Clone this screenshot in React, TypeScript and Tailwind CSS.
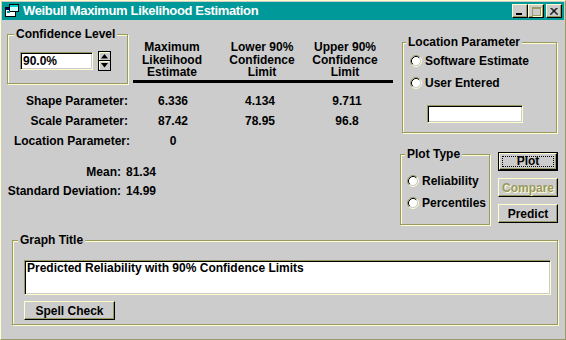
import React from "react";

const GroupBox = ({ label, className, labelClass, children }: { label: string; className: string; labelClass: string; children?: React.ReactNode }) => (
  <div className={`relative border border-[#999966] shadow-[inset_1px_1px_0_#ffffcc,1px_1px_0_#ffffcc] ${className}`}>
    <span className={`absolute -top-[8px] bg-[#cccccc] px-[2px] leading-[14px] ${labelClass}`}>{label}</span>
    {children}
  </div>
);

const RadioIcon = () => (
  <svg width="12" height="12" viewBox="0 0 12 12" className="shrink-0">
    <circle cx="6" cy="6" r="4.5" fill="#ffffff" />
    <path d="M2.11 9.89 A5.5 5.5 0 0 1 9.89 2.11" fill="none" stroke="#999966" />
    <path d="M9.89 2.11 A5.5 5.5 0 0 1 2.11 9.89" fill="none" stroke="#ffffcc" />
    <path d="M2.82 9.18 A4.5 4.5 0 0 1 9.18 2.82" fill="none" stroke="#000000" />
    <path d="M9.18 2.82 A4.5 4.5 0 0 1 2.82 9.18" fill="none" stroke="#cccccc" />
  </svg>
);

const Radio = ({ label, className = "" }: { label: string; className?: string }) => (
  <div className={`flex h-[14px] items-center gap-[3px] leading-[14px] ${className}`}>
    <RadioIcon />
    <span>{label}</span>
  </div>
);

const Field = ({ className, children }: { className: string; children?: React.ReactNode }) => (
  <div className={`border border-t-[#999966] border-l-[#999966] border-b-[#ffffcc] border-r-[#ffffcc] bg-white shadow-[inset_1px_1px_0_#000,inset_-1px_-1px_0_#cccccc] ${className}`}>
    {children}
  </div>
);

const Btn = ({ children, className = "", disabled = false }: { children: React.ReactNode; className?: string; disabled?: boolean }) => (
  <div
    className={`flex items-center justify-center border border-t-[#ffffcc] border-l-[#ffffcc] border-b-black border-r-black shadow-[inset_-1px_-1px_0_#999966] ${
      disabled ? "text-[#999966] [text-shadow:1px_1px_0_#ffffcc]" : ""
    } ${className}`}
  >
    {children}
  </div>
);

const Spin = () => (
  <svg width="13" height="20" viewBox="0 0 13 20" className="ml-[5px] -mt-[1px]">
    <rect x="0.5" y="0.5" width="12" height="19" fill="#cccccc" stroke="#000" />
    <path d="M1.5 9V1.5H11" fill="none" stroke="#ffffcc" />
    <path d="M1.5 18.5V10.5H11" fill="none" stroke="#ffffcc" />
    <line x1="1" y1="9.5" x2="12" y2="9.5" stroke="#000" />
    <path d="M6.5 3 L10 7.5 H3 Z" fill="#000" />
    <path d="M3 12 H10 L6.5 16.5 Z" fill="#000" />
  </svg>
);

const TitleBtn = ({ children, className = "" }: { children: React.ReactNode; className?: string }) => (
  <div className={`flex h-[14px] w-[16px] items-center justify-center border border-t-[#ffffcc] border-l-[#ffffcc] border-b-black border-r-black bg-[#cccccc] shadow-[inset_-1px_-1px_0_#999966] ${className}`}>
    {children}
  </div>
);

const TitleBar = () => (
  <div className="flex h-[18px] items-center bg-[#009999] text-white">
    <svg width="16" height="16" viewBox="0 0 16 16" className="ml-[2px]">
      <rect x="1.5" y="4.5" width="10" height="9" fill="#fff" stroke="#000" />
      <rect x="2" y="5" width="9" height="2" fill="#000080" />
      <rect x="5.5" y="1.5" width="9" height="7" fill="#ccffff" stroke="#000" />
      <rect x="6" y="2" width="8" height="2" fill="#00cccc" />
      <rect x="3" y="8" width="3" height="2" fill="#009999" />
    </svg>
    <span className="ml-[3px] text-[13px] tracking-[-0.35px]">Weibull Maximum Likelihood Estimation</span>
    <div className="ml-auto mr-[2px] flex items-center">
      <TitleBtn>
        <div className="mt-[6px] -ml-[2px] h-[2px] w-[6px] bg-black" />
      </TitleBtn>
      <TitleBtn>
        <div className="h-[9px] w-[9px] border border-[#999966] border-t-2 shadow-[1px_1px_0_#ffffcc]" />
      </TitleBtn>
      <TitleBtn className="ml-[2px]">
        <svg width="8" height="7" viewBox="0 0 8 7">
          <path d="M0.5 0 L7.5 7 M7.5 0 L0.5 7 M1.5 0 L8 6.5 M6.5 0 L0 6.5" stroke="#000" strokeWidth="1" />
        </svg>
      </TitleBtn>
    </div>
  </div>
);

const heads = [
  ["Maximum", "Likelihood", "Estimate"],
  ["Lower 90%", "Confidence", "Limit"],
  ["Upper 90%", "Confidence", "Limit"],
];

const rows = [
  ["Shape Parameter:", "6.336", "4.134", "9.711"],
  ["Scale Parameter:", "87.42", "78.95", "96.8"],
  ["Location Parameter:", "0", "", ""],
];

const App = () => {
  return (
    <div className="h-[340px] w-[566px] overflow-hidden bg-[#cccccc] font-['Liberation_Sans',Arial,sans-serif] text-[12px] font-bold text-black">
      <div className="flex h-[340px] w-[566px] flex-col border border-t-[#ffffcc] border-l-[#ffffcc] border-b-[#999966] border-r-[#999966] p-[1px]">
        <TitleBar />
        <div className="flex h-[220px]">
          <div className="w-[394px]">
            <div className="flex items-start">
              <GroupBox label="Confidence Level" className="ml-[5px] mt-[14px] h-[50px] w-[121px]" labelClass="left-[6px]">
                <div className="flex items-start pl-[12px] pt-[17px]">
                  <Field className="h-[18px] w-[73px] pl-[2px] leading-[16px]">90.0%</Field>
                  <Spin />
                </div>
              </GroupBox>
              <div className="ml-[5px] mt-[21px] w-[260px]">
                <div className="grid grid-cols-[78px_102px_64px] leading-[12.5px]">
                  {heads.map((h) => (
                    <div key={h[0]} className="flex flex-col items-center whitespace-nowrap">
                      {h.map((t) => (
                        <div key={t}>{t}</div>
                      ))}
                    </div>
                  ))}
                </div>
                <div className="mt-[1.5px] h-[3px] bg-black" />
              </div>
            </div>
            <div className="mt-[7px] grid grid-cols-[126px_90px_84px_90px]">
              {rows.map((r) => (
                <React.Fragment key={r[0]}>
                  <div className={`h-[20px] text-right leading-[20px] ${r[0].startsWith("Location") ? "-mr-[2px]" : ""}`}>{r[0]}</div>
                  <div className="text-center leading-[20px]">{r[1]}</div>
                  <div className="text-center leading-[20px]">{r[2]}</div>
                  <div className="text-center leading-[20px]">{r[3]}</div>
                </React.Fragment>
              ))}
            </div>
            <div className="mt-[12px] grid grid-cols-[119px_auto] gap-x-[5px] leading-[19px]">
              <div className="text-right">Mean:</div>
              <div>81.34</div>
              <div className="whitespace-nowrap text-right">Standard Deviation:</div>
              <div>14.99</div>
            </div>
          </div>
          <div className="w-[166px]">
            <GroupBox label="Location Parameter" className="ml-[6px] mt-[22px] h-[91px] w-[155px]" labelClass="left-[3px]">
              <div className="pl-[7px] pt-[11px]">
                <Radio label="Software Estimate" />
                <Radio label="User Entered" className="mt-[8px]" />
                <Field className="ml-[17px] mt-[15px] h-[18px] w-[96px]" />
              </div>
            </GroupBox>
            <div className="mt-[19px] flex items-start">
              <GroupBox label="Plot Type" className="ml-[4px] mt-[2px] h-[71px] w-[90px]" labelClass="left-[4px]">
                <div className="pl-[6px] pt-[19px]">
                  <Radio label="Reliability" />
                  <Radio label="Percentiles" className="mt-[8px]" />
                </div>
              </GroupBox>
              <div className="ml-[8px] flex w-[60px] flex-col gap-[7px]">
                <div className="h-[19px] border border-black">
                  <Btn className="h-full w-full p-[2px]">
                    <span className="flex h-full w-full items-center justify-center border border-dotted border-black leading-[11px]">Plot</span>
                  </Btn>
                </div>
                <Btn className="h-[19px]" disabled>
                  Compare
                </Btn>
                <Btn className="h-[19px]">Predict</Btn>
              </div>
            </div>
          </div>
        </div>
        <GroupBox label="Graph Title" className="ml-[10px] h-[85px] w-[546px]" labelClass="left-[5px]">
          <div className="pl-[11px] pt-[19px]">
            <Field className="h-[35px] w-[527px] px-[2px] leading-[15px]">Predicted Reliability with 90% Confidence Limits</Field>
            <Btn className="mt-[6px] h-[19px] w-[91px]">Spell Check</Btn>
          </div>
        </GroupBox>
      </div>
    </div>
  );
};

export default App;
